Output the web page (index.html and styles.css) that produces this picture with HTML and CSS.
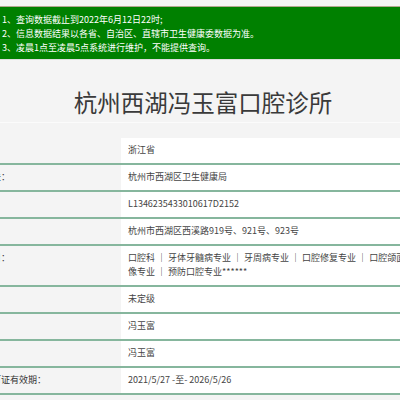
FILE: index.html
```html
<!DOCTYPE html>
<html lang="zh-CN">
<head>
<meta charset="utf-8">
<link rel="stylesheet" href="styles.css">
</head>
<body>
<div class="notice">
  <p>1、查询数据截止到2022年6月12日22时;</p>
  <p>2、信息数据结果以各省、自治区、直辖市卫生健康委数据为准。</p>
  <p>3、凌晨1点至凌晨5点系统进行维护，不能提供查询。</p>
</div>
<h1 class="title">杭州西湖冯玉富口腔诊所</h1>
<div class="info">
  <div class="row"><div class="label">省份：</div><div class="value">浙江省</div></div>
  <div class="row"><div class="label">登记机关：</div><div class="value">杭州市西湖区卫生健康局</div></div>
  <div class="row"><div class="label">登记号：</div><div class="value">L1346235433010617D2152</div></div>
  <div class="row"><div class="label">地址：</div><div class="value">杭州市西湖区西溪路919号、921号、923号</div></div>
  <div class="row"><div class="label">诊疗科目：</div><div class="value">口腔科 ｜ 牙体牙髓病专业 ｜ 牙周病专业 ｜ 口腔修复专业 ｜ 口腔颌面医学影<br>像专业 ｜ 预防口腔专业******</div></div>
  <div class="row"><div class="label">级别：</div><div class="value">未定级</div></div>
  <div class="row"><div class="label">法人：</div><div class="value">冯玉富</div></div>
  <div class="row"><div class="label">负责人：</div><div class="value">冯玉富</div></div>
  <div class="row"><div class="label">执业许可证有效期：</div><div class="value">2021/5/27 -至- 2026/5/26</div></div>
</div>
</body>
</html>
```
FILE: styles.css
```css
html, body {
  margin: 0;
  padding: 0;
}
body {
  background: #f4f4f4;
  overflow: hidden;
  font-family: "Noto Sans CJK SC", "Noto Sans", sans-serif;
  color: #333;
}
.notice {
  margin-top: 6px;
  border-top: 1px solid #b3a88f;
  border-bottom: 1px solid #dedede;
  background: #008000;
  color: #fff;
  padding: 6px 2px 4px;
  font-size: 9px;
  line-height: 14px;
}
.notice p {
  margin: 0;
  white-space: nowrap;
}
.title {
  margin: 0;
  padding: 26px 0 4px 6px;
  font-size: 23.5px;
  line-height: 32px;
  font-weight: normal;
  text-align: center;
  color: #3a3a3a;
  border-bottom: 1px solid #fbfbfb;
}
.info {
  margin: 15px 0 0 -40px;
  font-size: 9px;
  line-height: 14px;
}
.row {
  display: flex;
  border-bottom: 2px solid #86b69d;
}
.label {
  flex: 0 0 161px;
  box-sizing: border-box;
  padding: 5px 0 6px 5px;
  white-space: nowrap;
  color: #333;
}
.value {
  flex: 1 1 auto;
  background: #fff;
  padding: 5px 7px 6px;
  white-space: nowrap;
  color: #444;
}
```
